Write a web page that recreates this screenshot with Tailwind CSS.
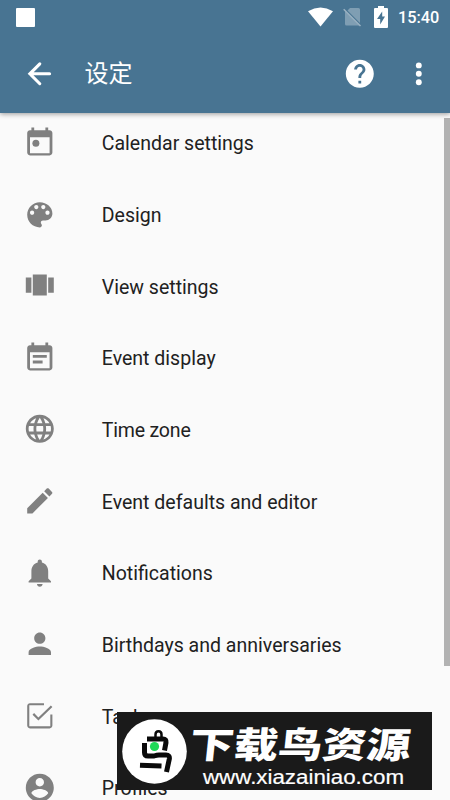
<!DOCTYPE html>
<html lang="zh">
<head>
<meta charset="utf-8">
<title>设定</title>
<script src="https://cdn.jsdelivr.net/npm/@tailwindcss/browser@4"></script>
</head>
<body class="bg-[#fafafa] font-[Roboto,'Noto_Sans_CJK_SC',sans-serif]">
<div class="relative w-[450px] h-[800px] overflow-hidden bg-[#fafafa]">
  <header class="relative z-10 h-[113px] bg-[#487492] text-white shadow-[0_1px_5px_rgba(0,0,0,0.4)]">
    <div class="flex h-[34px] items-center pl-4 pr-[11px]">
      <div class="size-[19px] rounded-[1px] bg-white"></div>
      <svg class="ml-auto w-[25px] h-[20px]" viewBox="0 0 25 20" fill="#fff"><path d="M0 4.200Q12.500-3 25 4.200L12.500 19.500z"/></svg>
      <svg class="ml-[10px] w-[19px] h-[20px]" viewBox="0 0 19 20"><path d="M7 1h8.500q1.500 0 1.500 1.500v13.500L4.500 3.500zM2 4L16.500 18.500H3.500Q2 18.500 2 17z" fill="#7f9eb3"/><path d="M.7 2.200L17.500 19" stroke="#9ab2c2" stroke-width="1.500"/></svg>
      <svg class="ml-[12px] w-[14px] h-[22px]" viewBox="0 0 14 22"><path d="M4 0h6v2h3q1 0 1 1v18q0 1-1 1H1q-1 0-1-1V3q0-1 1-1h3z" fill="#fff"/><path d="M8.200 5.500L3 13h3.200v5.500L11 10.500H8.200z" fill="#487492"/></svg>
      <span class="relative top-px ml-[10px] w-[41px] whitespace-nowrap text-[16.300px] font-medium leading-none">15:40</span>
    </div>
    <div class="flex h-[79px] items-center pl-[23px] pr-[14px]">
      <svg class="size-[33.600px]" viewBox="0 0 24 24" fill="none" stroke="#fff" stroke-width="2.200" stroke-linecap="round"><path d="M19 12H5M12 4.900L4.900 12l7.100 7.100" stroke-linejoin="miter"/></svg>
      <h1 class="relative -top-[2px] ml-[28px] text-[24px] leading-none font-normal font-['Noto_Sans_CJK_SC',sans-serif]">设定</h1>
      <svg class="ml-auto size-[33.600px]" viewBox="0 0 24 24" fill="#fff"><path d="M12 2C6.480 2 2 6.480 2 12s4.480 10 10 10 10-4.480 10-10S17.520 2 12 2zm1 17h-2v-2h2v2zm2.070-7.750l-.9.920C13.450 12.900 13 13.500 13 15h-2v-.5c0-1.100.450-2.100 1.170-2.830l1.240-1.260c.370-.360.590-.860.590-1.410 0-1.100-.9-2-2-2s-2 .9-2 2H8c0-2.210 1.790-4 4-4s4 1.790 4 4c0 .880-.360 1.680-.930 2.250z"/></svg>
      <svg class="ml-[26px] size-[33.600px]" viewBox="0 0 24 24" fill="#fff"><circle cx="12" cy="6" r="2.100"/><circle cx="12" cy="12" r="2.100"/><circle cx="12" cy="18" r="2.100"/></svg>
    </div>
  </header>

  <ul class="-mt-[6.200px] text-[19.550px] text-[#212121] [&>li]:flex [&>li]:h-[71.670px] [&>li]:items-center [&>li]:gap-[45.400px] [&>li]:pl-[22.800px] [&_svg]:size-[33.600px] [&_svg]:fill-[#808080] [&_span]:whitespace-nowrap [&_span]:relative [&_span]:top-[1.400px]">
    <li><svg viewBox="0 0 24 24"><path d="M19 3h-1V1h-2v2H8V1H6v2H5c-1.110 0-2 .9-2 2v14c0 1.100.890 2 2 2h14c1.100 0 2-.9 2-2V5c0-1.100-.9-2-2-2zm0 16.500H5V8h14v11.500z"/><circle cx="9.200" cy="12.300" r="2.500"/></svg><span>Calendar settings</span></li>
    <li><svg viewBox="0 0 24 24"><path d="M12 3c-4.970 0-9 4.030-9 9s4.030 9 9 9c.830 0 1.500-.670 1.500-1.500 0-.390-.150-.740-.390-1.010-.230-.260-.380-.610-.380-.990 0-.830.670-1.500 1.500-1.500H16c2.760 0 5-2.240 5-5 0-4.420-4.030-8-9-8zm-5.500 9c-.830 0-1.500-.670-1.500-1.500S5.670 9 6.500 9 8 9.670 8 10.500 7.330 12 6.500 12zm3-4C8.670 8 8 7.330 8 6.500S8.670 5 9.500 5s1.500.670 1.500 1.500S10.330 8 9.500 8zm5 0c-.830 0-1.500-.670-1.500-1.500S13.670 5 14.500 5s1.500.670 1.500 1.500S15.330 8 14.500 8zm3 4c-.830 0-1.500-.670-1.500-1.500S16.670 9 17.500 9s1.500.670 1.500 1.500-.670 1.500-1.500 1.500z"/></svg><span>Design</span></li>
    <li><svg viewBox="0 0 24 24"><path d="M7 19h10V4H7v15zm-5-2h4V6H2v11zM18 6v11h4V6h-4z"/></svg><span>View settings</span></li>
    <li><svg viewBox="0 0 24 24"><path d="M19 3h-1V1h-2v2H8V1H6v2H5c-1.110 0-2 .9-2 2v14c0 1.100.890 2 2 2h14c1.100 0 2-.9 2-2V5c0-1.100-.9-2-2-2zm0 16.500H5V8h14v11.500zM17 10H7v2h10v-2zm-3 4H7v2h7v-2z"/></svg><span>Event display</span></li>
    <li><svg viewBox="0 0 24 24"><path d="M11.990 2C6.470 2 2 6.480 2 12s4.470 10 9.990 10C17.520 22 22 17.520 22 12S17.520 2 11.990 2zm6.930 6h-2.950c-.320-1.250-.780-2.450-1.380-3.560 1.840.630 3.370 1.910 4.330 3.560zM12 4.040c.830 1.200 1.480 2.530 1.910 3.960h-3.820c.430-1.430 1.080-2.760 1.910-3.960zM4.260 14C4.100 13.360 4 12.690 4 12s.1-1.360.260-2h3.380c-.080.660-.140 1.320-.140 2 0 .680.060 1.340.140 2H4.260zm.820 2h2.950c.320 1.250.780 2.450 1.380 3.560-1.840-.630-3.370-1.900-4.330-3.560zm2.950-8H5.080c.960-1.660 2.490-2.930 4.330-3.560C8.810 5.550 8.350 6.750 8.030 8zM12 19.960c-.830-1.200-1.480-2.530-1.910-3.960h3.820c-.430 1.430-1.080 2.760-1.910 3.960zM14.340 14H9.660c-.090-.660-.160-1.320-.160-2 0-.680.070-1.350.160-2h4.680c.090.650.160 1.320.160 2 0 .680-.070 1.340-.160 2zm.250 5.560c.600-1.110 1.060-2.310 1.380-3.560h2.950c-.960 1.650-2.490 2.930-4.330 3.560zM16.360 14c.080-.660.140-1.320.140-2 0-.680-.060-1.340-.140-2h3.380c.160.640.260 1.310.260 2s-.1 1.360-.260 2h-3.380z"/></svg><span class="tracking-[-0.200px]">Time zone</span></li>
    <li><svg viewBox="0 0 24 24"><path d="M3 17.250V21h3.750L17.810 9.940l-3.750-3.750L3 17.250zM20.710 7.040c.390-.390.390-1.020 0-1.410l-2.340-2.340c-.390-.390-1.020-.390-1.410 0l-1.830 1.830 3.750 3.750 1.830-1.830z"/></svg><span>Event defaults and editor</span></li>
    <li><svg viewBox="0 0 24 24"><path d="M12 22c1.100 0 2-.9 2-2h-4c0 1.100.890 2 2 2zM18 16v-5c0-3.070-1.640-5.640-4.500-6.320V4c0-.830-.670-1.500-1.500-1.500s-1.500.670-1.500 1.500v.680C7.630 5.360 6 7.920 6 11v5l-2 2v1h16v-1l-2-2z"/></svg><span>Notifications</span></li>
    <li><svg viewBox="0 0 24 24"><path d="M12 12c2.210 0 4-1.790 4-4s-1.790-4-4-4-4 1.790-4 4 1.790 4 4 4zm0 2c-2.670 0-8 1.340-8 4v2h16v-2c0-2.660-5.330-4-8-4z"/></svg><span>Birthdays and anniversaries</span></li>
    <li><svg viewBox="0 0 24 24"><path d="M19.500 11v8.500h-15v-15H15V3H5c-1.100 0-2 .9-2 2v14c0 1.100.9 2 2 2h14c1.100 0 2-.9 2-2v-8z"/><path d="M7.910 10.080L6.800 11.200l4.200 4.200 10-9.600-1.100-1.100L11 13.200z"/></svg><span>Tasks</span></li>
    <li><svg viewBox="0 0 24 24"><path d="M12 2C6.480 2 2 6.480 2 12s4.480 10 10 10 10-4.480 10-10S17.520 2 12 2zm0 3c1.660 0 3 1.340 3 3s-1.340 3-3 3-3-1.340-3-3 1.340-3 3-3zm0 14.200c-2.500 0-4.710-1.280-6-3.220.030-1.990 4-3.080 6-3.080 1.990 0 5.970 1.090 6 3.080-1.290 1.940-3.500 3.220-6 3.220z"/></svg><span>Profiles</span></li>
  </ul>

  <div class="absolute right-0 top-[118px] h-[548px] w-[6px] bg-[#b2b2b2]"></div>

  <div class="absolute left-[117px] top-[712px] flex h-[78px] w-[315px] items-center bg-[#1a1a1a] pl-[5px] text-white">
    <svg class="size-[65px] shrink-0" viewBox="0 0 65 65"><circle cx="32.500" cy="32.500" r="32.300" fill="#fff"/>
      <g fill="none" stroke="#0a0a0a" stroke-width="5"><path d="M33.500 18V15.500C33.500 11 39.500 11 39.500 15.500V18" stroke-width="2.500"/><path d="M25 20H41Q44.500 20 44 23.500L42.500 31.500"/><path d="M22.500 24V33.500Q22.500 37 26 37H32Q35 36 37 36H44Q48 36 47.300 40L44.500 53"/><path d="M18 46.200L39.500 47"/></g><circle cx="32.500" cy="27.500" r="4.600" fill="#20d958"/></svg>
    <svg class="h-[78px] w-[240px] shrink-0 overflow-visible" viewBox="0 0 240 78"><text transform="translate(1.500 45.500) skewX(-6)" font-family="Noto Sans CJK SC" font-weight="900" font-size="36" textLength="221" lengthAdjust="spacingAndGlyphs" fill="#fff">下载鸟资源</text><text x="16" y="71.500" font-family="Liberation Sans" font-size="20" textLength="201" lengthAdjust="spacingAndGlyphs" fill="#fff" stroke="#fff" stroke-width=".2">www.xiazainiao.com</text></svg>
  </div>
</div>
</body>
</html>
